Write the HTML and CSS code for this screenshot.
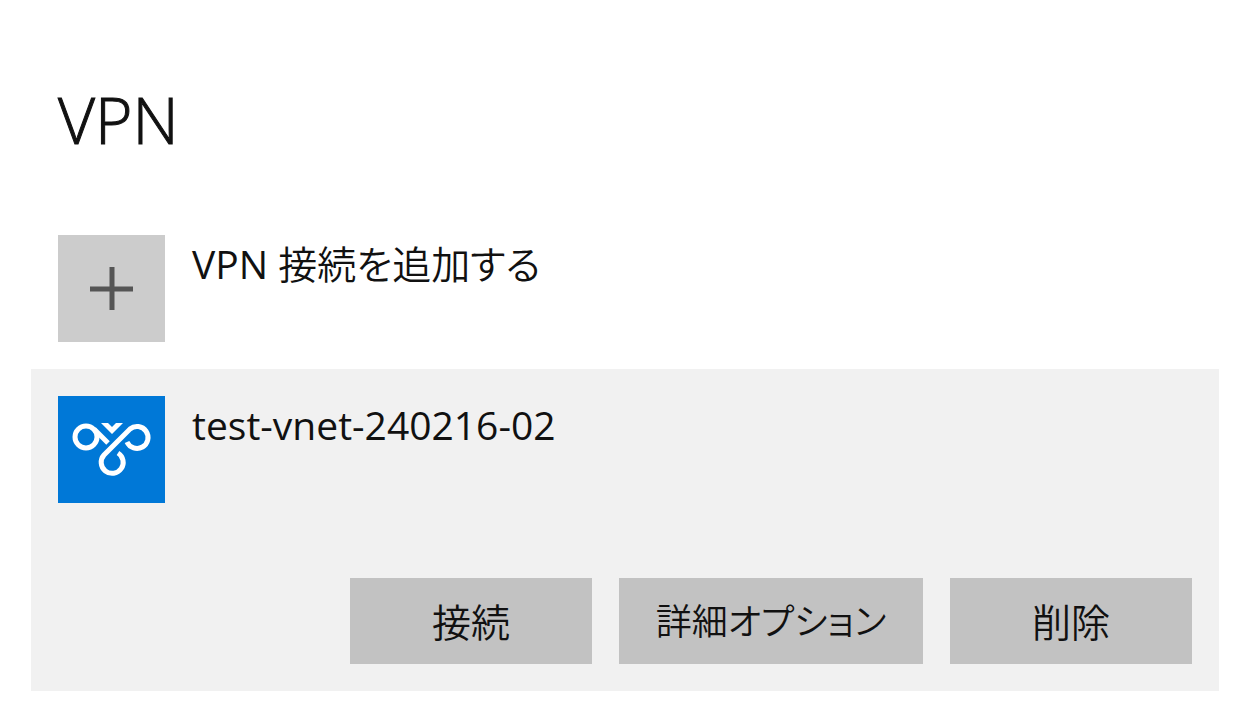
FILE: index.html
```html
<!DOCTYPE html>
<html lang="ja">
<head>
    <meta charset="UTF-8">
    <title>VPN</title>
    <link rel="stylesheet" href="styles.css">
</head>
<body>
    <main class="container">
        <h1>VPN</h1>

        <button type="button" class="item add-item">
            <span class="tile">
                <svg width="107" height="107" viewBox="0 0 107 107" aria-hidden="true">
                    <path class="plus" d="M32 54H75M54 32V75"/>
                </svg>
            </span>
            <span class="item-name">VPN 接続を追加する</span>
        </button>

        <section class="connection">
            <div class="item">
                <span class="tile vpn-tile">
                    <svg width="107" height="107" viewBox="0 0 107 107" aria-hidden="true">
                        <circle class="knot" cx="28" cy="41" r="11"/>
                        <path class="knot" d="M36 33L50 47"/>
                        <path class="knot" d="M69 46A11 11 0 1 0 72 33L46 59A11 11 0 1 0 60 57"/>
                        <path class="check" d="M43 27H50L54 31L58 27H65L54 38Z"/>
                    </svg>
                </span>
                <h2 class="item-name">test-vnet-240216-02</h2>
            </div>

            <div class="actions">
                <button type="button" class="action">接続</button>
                <button type="button" class="action wide">詳細オプション</button>
                <button type="button" class="action">削除</button>
            </div>
        </section>
    </main>
</body>
</html>
```

FILE: styles.css
```css
* {
    box-sizing: border-box;
}

body {
    margin: 0;
    background-color: #fff;
    color: #111;
    font-family: "Open Sans", "Noto Sans CJK JP DemiLight", "Noto Sans CJK JP", sans-serif;
    font-feature-settings: "palt";
}

.container {
    padding: 80px 31px 30px;
}

h1 {
    margin: 0 0 75px;
    padding-left: 27px;
    font-size: 64px;
    font-weight: 300;
    line-height: 80px;
    -webkit-text-stroke: 1px #111;
}

.item {
    display: flex;
    align-items: flex-start;
    gap: 27px;
}

.add-item {
    width: 100%;
    margin-bottom: 27px;
    padding: 0 27px;
    border: none;
    background: none;
    color: inherit;
    font: inherit;
    font-feature-settings: inherit;
    text-align: left;
    cursor: pointer;
}

.item-name {
    margin: 0;
    font-size: 39px;
    font-weight: 400;
    line-height: 58px;
}

.tile {
    display: flex;
    flex: none;
    background-color: #ccc;
}

.vpn-tile {
    background-color: #0078d7;
}

.plus {
    stroke: #555;
    stroke-width: 5;
}

.knot {
    fill: none;
    stroke: #fff;
    stroke-width: 5;
}

.check {
    fill: #fff;
}

.connection {
    padding: 27px;
    background-color: #f1f1f1;
}

.actions {
    display: flex;
    justify-content: flex-end;
    gap: 27px;
    margin-top: 75px;
}

.action {
    width: 242px;
    height: 86px;
    padding: 2px 0 0;
    border: none;
    background-color: #c2c2c2;
    color: inherit;
    font-family: inherit;
    font-size: 39px;
    font-feature-settings: inherit;
    line-height: 58px;
    cursor: pointer;
}

.wide {
    width: 304px;
    font-size: 36px;
}

.action:hover {
    background-color: #b3b3b3;
}
```
